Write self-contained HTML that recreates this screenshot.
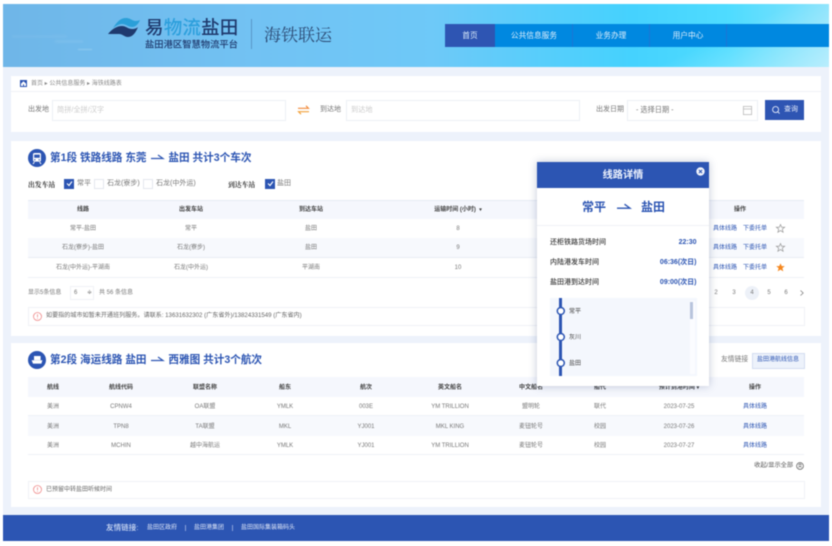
<!DOCTYPE html>
<html lang="zh"><head><meta charset="utf-8"><title>海铁联运</title>
<style>
html,body{margin:0;padding:0;background:#fff}
body{width:832px;height:546px;overflow:hidden;position:relative;font-family:"Liberation Sans","Noto Sans CJK SC",sans-serif;color:#777}
#r{position:absolute;left:0;top:0;width:832px;height:546px;filter:blur(.4px);overflow:hidden}
.a{position:absolute}
.c,.l,.e{position:absolute;white-space:nowrap;font-size:6px;line-height:10px}
.c{transform:translate(-50%,-50%)}
.l{transform:translateY(-50%)}
.e{transform:translate(-100%,-50%)}
.h{color:#444;font-weight:700}
.b{color:#2c55b3}
.t{font-size:10.6px;font-weight:700;color:#2c55b3;line-height:16px}
.ar{display:inline-block;width:12px;height:6px;margin:0 2px;vertical-align:1px}
.ar svg{position:static;display:block}
.cb{position:absolute;width:8px;height:8px;border:1px solid #e4e7ee;background:#fff;top:178.5px}
.on{background:#2c55b3;border-color:#2c55b3}
.inp{position:absolute;top:100px;height:19px;background:#fff;border:1px solid #edf0f5}
.ln{position:absolute;left:28px;width:776px;height:1px;background:#eef1f7}
.band{position:absolute;left:28px;width:776px;background:#f5f7fd}
svg{position:absolute;overflow:visible}
.f7{font-size:7px}
.pl{font-size:7.2px;color:#ccc}
.n{color:#e0f0fc;font-size:7.7px}
.k{font-size:7px;color:#3a3a3a;font-weight:500}
.v{font-size:7px;color:#2c55b3;font-weight:700}
.s{font-size:6px;color:#444}
</style></head><body><div id="r">

<div class="a" style="left:3px;top:4px;width:826px;height:63px;background:linear-gradient(155deg,rgba(255,255,255,0) 82%,rgba(255,255,255,.42) 100%),linear-gradient(90deg,#6fb6e8 0%,#72c2f3 30%,#6ec9f8 52%,#45d2fe 76%,#4fdcff 88%,#86e2fc 100%)"></div>
<div class="a" style="left:12px;top:36px;width:55px;height:1px;background:rgba(255,255,255,.14);filter:blur(1px)"></div>
<div class="a" style="left:55px;top:41px;width:28px;height:1px;background:rgba(255,255,255,.2);filter:blur(1px)"></div>
<div class="a" style="left:78px;top:49px;width:14px;height:1px;background:rgba(255,255,255,.25);filter:blur(.6px)"></div>

<svg style="left:108px;top:18px" width="32" height="20" viewBox="0 0 32 20">
<path d="M5 10C9 4 12 0 18 0c4 0 5 2 9 3 2 0 4-.4 5-1-1 3-4 7-8 7-4 0-6-3-10-3-3 0-6 2-9 4z" fill="#2a9fd8"/>
<path d="M0 16C4 11 9 8 14 8c4 0 6 3 10 3 3 0 5-1 6-2-2 5-5 10-10 10-4 0-5-3-9-3-4 0-8 0-11 0z" fill="#1f3a6e"/></svg>
<div class="l" style="left:145px;top:28px;font-size:18.5px;line-height:20px;letter-spacing:.2px;color:#1f3a6e;font-weight:500"><span>易</span><span style="color:#2c9fdc">物流</span><span>盐田</span></div>
<div class="l" style="left:145px;top:45px;font-size:9.3px;line-height:11px;color:#1f3a6e;font-weight:500">盐田港区智慧物流平台</div>
<div class="a" style="left:251px;top:19px;width:1px;height:30px;background:rgba(60,100,150,.45)"></div>
<div class="l" style="left:264px;top:34px;font-family:'Noto Serif CJK SC',serif;font-size:17px;line-height:20px;color:#2b4a74">海铁联运</div>

<div class="a" style="left:445px;top:24px;width:384px;height:23px;background:#0088e0"></div>
<div class="a" style="left:445px;top:24px;width:50px;height:23px;background:#2e55b3"></div>
<div class="a" style="left:572px;top:24px;width:1px;height:23px;background:#1d76d4"></div>
<div class="a" style="left:649px;top:24px;width:1px;height:23px;background:#1d76d4"></div>
<div class="a" style="left:726px;top:24px;width:1px;height:23px;background:#1d76d4"></div>
<div class="c n" style="left:470px;top:36px">首页</div>
<div class="c n" style="left:534px;top:36px">公共信息服务</div>
<div class="c n" style="left:611px;top:36px">业务办理</div>
<div class="c n" style="left:688px;top:36px">用户中心</div>

<div class="a" style="left:3px;top:67px;width:826px;height:448px;background:#edf2fb"></div>
<div class="a" style="left:11px;top:76px;width:810px;height:56px;background:#fff"></div>
<div class="a" style="left:11px;top:141px;width:810px;height:195px;background:#fff"></div>
<div class="a" style="left:11px;top:343px;width:810px;height:164px;background:#fff"></div>
<div class="a" style="left:3px;top:515px;width:826px;height:26px;background:#2c55b3"></div>

<!-- breadcrumb -->
<div class="a" style="left:11px;top:91px;width:810px;height:1px;background:#f0f2f6"></div>
<svg style="left:20px;top:80px" width="7" height="7" viewBox="0 0 7 7"><rect width="7" height="7" fill="#2c55b3"/><path d="M1 3.6L3.5 1.3 6 3.6V6H1z" fill="#fff"/><rect x="3" y="4.2" width="1" height="1.8" fill="#2c55b3"/></svg>
<div class="l" style="left:31px;top:84px;color:#888">首页 ▸ 公共信息服务 ▸ 海铁线路表</div>

<!-- search -->
<div class="l f7" style="left:28px;top:110px">出发地</div>
<div class="inp" style="left:52px;width:232px"></div>
<div class="l pl" style="left:57px;top:110px">简拼/全拼/汉字</div>
<svg style="left:298px;top:105px" width="11" height="10" viewBox="0 0 11 10" fill="none" stroke-width="1.1"><path d="M0 3.3h10.5L8 .8" stroke="#f28a3a"/><path d="M11 6.7H.5L3 9.2" stroke="#f2a13a"/></svg>
<div class="l f7" style="left:320px;top:110px">到达地</div>
<div class="inp" style="left:346px;width:232px"></div>
<div class="l pl" style="left:351px;top:110px">到达地</div>
<div class="l f7" style="left:596px;top:110px">出发日期</div>
<div class="inp" style="left:627px;width:129px"></div>
<div class="l" style="left:636px;top:110px;font-size:7.2px">- 选择日期 -</div>
<svg style="left:743px;top:106px" width="9" height="9" viewBox="0 0 9 9" fill="none" stroke="#bbb" stroke-width=".8"><rect x=".4" y=".4" width="8.2" height="8.2"/><path d="M.4 3h8.2"/></svg>
<div class="a" style="left:765px;top:100px;width:39px;height:20px;background:#2e55b3"></div>
<svg style="left:772px;top:106px" width="8" height="8" viewBox="0 0 8 8" fill="none" stroke="#e8eefb" stroke-width=".9"><circle cx="3.6" cy="3.6" r="3"/><path d="M5.8 5.8L7.6 7.6"/></svg>
<div class="l f7" style="left:784px;top:110px;color:#e8eefb">查询</div>

<!-- section 1 -->
<svg style="left:28px;top:149px" width="18" height="18" viewBox="0 0 18 18"><circle cx="9" cy="9" r="9" fill="#2c55b3"/><rect x="5" y="4" width="8" height="8.6" rx="1.6" fill="#fff"/><rect x="6.2" y="5.6" width="5.6" height="3.2" fill="#2c55b3"/><circle cx="6.8" cy="10.8" r=".7" fill="#2c55b3"/><circle cx="11.2" cy="10.8" r=".7" fill="#2c55b3"/><path d="M6.4 13l-1.4 2M11.6 13l1.4 2" stroke="#fff" stroke-width="1"/></svg>
<div class="l t" style="left:50px;top:158px">第1段 铁路线路 东莞 <span class="ar"><svg width="12" height="6" viewBox="0 0 12 6" fill="none" stroke="#2c55b3" stroke-width="1.2"><path d="M0 4.5h12L7 1"/></svg></span> 盐田 共计3个车次</div>

<div class="l" style="left:28px;top:183.5px;font-family:'Noto Serif CJK SC',serif;font-size:6.8px;color:#333;font-weight:700">出发车站</div>
<div class="cb on" style="left:64px"></div>
<svg style="left:65.5px;top:180px" width="7" height="7" viewBox="0 0 7 7" fill="none" stroke="#fff" stroke-width="1.1"><path d="M1 3.5l2 2 3-4"/></svg>
<div class="l f7" style="left:77px;top:184px">常平</div>
<div class="cb" style="left:94px"></div>
<div class="l f7" style="left:107px;top:184px">石龙(寮步)</div>
<div class="cb" style="left:143px"></div>
<div class="l f7" style="left:156px;top:184px">石龙(中外运)</div>
<div class="l" style="left:228px;top:183.5px;font-family:'Noto Serif CJK SC',serif;font-size:6.8px;color:#333;font-weight:700">到达车站</div>
<div class="cb on" style="left:265px"></div>
<svg style="left:266.5px;top:180px" width="7" height="7" viewBox="0 0 7 7" fill="none" stroke="#fff" stroke-width="1.1"><path d="M1 3.5l2 2 3-4"/></svg>
<div class="l f7" style="left:277px;top:184px">盐田</div>

<div class="band" style="top:200px;height:19px"></div>
<div class="ln" style="top:200px;background:#e6ebf5"></div>
<div class="band" style="top:238px;height:19px;background:#f7f9fd"></div>
<div class="ln" style="top:257px;background:#e9edf4"></div>
<div class="ln" style="top:277px"></div>

<div class="c h" style="left:83px;top:210px">线路</div>
<div class="c h" style="left:191px;top:210px">出发车站</div>
<div class="c h" style="left:311px;top:210px">到达车站</div>
<div class="c h" style="left:458px;top:210px">运输时间 (小时) &nbsp;<span style="font-size:5px">▾</span></div>
<div class="c h" style="left:740px;top:210px">操作</div>

<div class="c" style="left:83px;top:229px">常平-盐田</div>
<div class="c" style="left:191px;top:229px">常平</div>
<div class="c" style="left:311px;top:229px">盐田</div>
<div class="c" style="left:458px;top:229px">8</div>
<div class="c" style="left:83px;top:248px">石龙(寮步)-盐田</div>
<div class="c" style="left:191px;top:248px">石龙(寮步)</div>
<div class="c" style="left:311px;top:248px">盐田</div>
<div class="c" style="left:458px;top:248px">9</div>
<div class="c" style="left:83px;top:268px">石龙(中外运)-平湖南</div>
<div class="c" style="left:191px;top:268px">石龙(中外运)</div>
<div class="c" style="left:311px;top:268px">平湖南</div>
<div class="c" style="left:458px;top:268px">10</div>

<div class="l" style="left:28px;top:293px">显示5条信息</div>
<div class="a" style="left:70px;top:286px;width:22px;height:12px;border:1px solid #f0f2f6"></div>
<div class="l" style="left:74px;top:293px">6</div>
<div class="l" style="left:87px;top:293px">≑</div>
<div class="l" style="left:99px;top:293px">共 56 条信息</div>

<div class="a" style="left:28px;top:307px;width:775px;height:17px;border:1px solid #f0f2f6"></div>
<svg style="left:33px;top:312px" width="9" height="9" viewBox="0 0 9 9" fill="none" stroke="#ef8a8a" stroke-width=".8"><circle cx="4.5" cy="4.5" r="4"/><path d="M4.5 2.2v3M4.5 6.2v.8"/></svg>
<div class="l" style="left:46px;top:316px;font-size:6.1px;color:#666">如要指的城市如暂未开通班列服务。请联系: 13631632302 (广东省外)/13824331549 (广东省内)</div>

<!-- section 2 -->
<svg style="left:28px;top:351px" width="18" height="18" viewBox="0 0 18 18"><circle cx="9" cy="9" r="9" fill="#2c55b3"/><path d="M3.6 9.2h10.8l-1 3.4H5z" fill="#fff"/><rect x="6" y="5" width="6.6" height="4.2" fill="#fff"/></svg>
<div class="l t" style="left:50px;top:360px">第2段 海运线路 盐田 <span class="ar"><svg width="12" height="6" viewBox="0 0 12 6" fill="none" stroke="#2c55b3" stroke-width="1.2"><path d="M0 4.5h12L7 1"/></svg></span> 西雅图 共计3个航次</div>
<div class="l" style="left:721px;top:360px;font-size:6.8px">友情链接</div>
<div class="a" style="left:752px;top:353px;width:51px;height:14px;background:#edf2fb;border:1px solid #d3ddf0"></div>
<div class="c b" style="left:778px;top:360px">盐田港航线信息</div>

<div class="band" style="top:377px;height:20px"></div>
<div class="band" style="top:416px;height:20px;background:#f7f9fd"></div>
<div class="ln" style="top:415px"></div>
<div class="ln" style="top:454px"></div>

<div class="c h" style="left:53px;top:387.5px">航线</div>
<div class="c h" style="left:121px;top:387.5px">航线代码</div>
<div class="c h" style="left:205px;top:387.5px">联盟名称</div>
<div class="c h" style="left:285px;top:387.5px">船东</div>
<div class="c h" style="left:366px;top:387.5px">航次</div>
<div class="c h" style="left:450px;top:387.5px">英文船名</div>
<div class="c h" style="left:531px;top:387.5px">中文船名</div>
<div class="c h" style="left:600px;top:387.5px">船代</div>
<div class="c h" style="left:679px;top:387.5px">预计到港时间 <span style="font-size:5px">▾</span></div>
<div class="c h" style="left:755px;top:387.5px">操作</div>

<div class="c" style="left:53px;top:406.5px">美洲</div>
<div class="c" style="left:121px;top:406.5px">CPNW4</div>
<div class="c" style="left:205px;top:406.5px">OA联盟</div>
<div class="c" style="left:285px;top:406.5px">YMLK</div>
<div class="c" style="left:366px;top:406.5px">003E</div>
<div class="c" style="left:450px;top:406.5px">YM TRILLION</div>
<div class="c" style="left:531px;top:406.5px">盟明轮</div>
<div class="c" style="left:600px;top:406.5px">联代</div>
<div class="c" style="left:679px;top:406.5px">2023-07-25</div>
<div class="c b" style="left:755px;top:406.5px">具体线路</div>

<div class="c" style="left:53px;top:426.5px">美洲</div>
<div class="c" style="left:121px;top:426.5px">TPN8</div>
<div class="c" style="left:205px;top:426.5px">TA联盟</div>
<div class="c" style="left:285px;top:426.5px">MKL</div>
<div class="c" style="left:366px;top:426.5px">YJ001</div>
<div class="c" style="left:450px;top:426.5px">MKL KING</div>
<div class="c" style="left:531px;top:426.5px">麦钮轮号</div>
<div class="c" style="left:600px;top:426.5px">校园</div>
<div class="c" style="left:679px;top:426.5px">2023-07-26</div>
<div class="c b" style="left:755px;top:426.5px">具体线路</div>

<div class="c" style="left:53px;top:445.5px">美洲</div>
<div class="c" style="left:121px;top:445.5px">MCHIN</div>
<div class="c" style="left:205px;top:445.5px">越中海航运</div>
<div class="c" style="left:285px;top:445.5px">YMLK</div>
<div class="c" style="left:366px;top:445.5px">YJ001</div>
<div class="c" style="left:450px;top:445.5px">YM TRILLION</div>
<div class="c" style="left:531px;top:445.5px">麦钮轮号</div>
<div class="c" style="left:600px;top:445.5px">校园</div>
<div class="c" style="left:679px;top:445.5px">2023-07-27</div>
<div class="c b" style="left:755px;top:445.5px">具体线路</div>

<div class="e" style="left:793px;top:466px;font-size:6.2px;color:#555">收起/显示全部</div>
<svg style="left:796px;top:462px" width="8" height="8" viewBox="0 0 8 8" fill="none" stroke="#555" stroke-width=".7"><circle cx="4" cy="4" r="3.4"/><path d="M2.4 3.2L4 1.9l1.6 1.3M2.4 5.4L4 4.1l1.6 1.3"/></svg>

<div class="a" style="left:28px;top:481px;width:775px;height:16px;border:1px solid #f0f2f6"></div>
<svg style="left:33px;top:485px" width="9" height="9" viewBox="0 0 9 9" fill="none" stroke="#ef8a8a" stroke-width=".8"><circle cx="4.5" cy="4.5" r="4"/><path d="M4.5 2.2v3M4.5 6.2v.8"/></svg>
<div class="l" style="left:46px;top:489.5px;color:#666">已预留中转盐田听候时间</div>

<!-- footer -->
<div class="l" style="left:106px;top:528px;font-size:7.6px;color:#cfdcf4;font-weight:500">友情链接:</div>
<div class="l" style="left:147px;top:528px;color:#dfe7f8">盐田区政府</div>
<div class="a" style="left:185px;top:525px;width:1px;height:6px;background:#8aa3db"></div>
<div class="l" style="left:194px;top:528px;color:#dfe7f8">盐田港集团</div>
<div class="a" style="left:232px;top:525px;width:1px;height:6px;background:#8aa3db"></div>
<div class="l" style="left:241px;top:528px;color:#dfe7f8">盐田国际集装箱码头</div>

<!-- table ops -->
<div class="l b" style="left:713px;top:228.5px">具体线路</div>
<div class="l b" style="left:743px;top:228.5px">下委托单</div>
<div class="l b" style="left:713px;top:248px">具体线路</div>
<div class="l b" style="left:743px;top:248px">下委托单</div>
<div class="l b" style="left:713px;top:267.5px">具体线路</div>
<div class="l b" style="left:743px;top:267.5px">下委托单</div>
<svg style="left:775.5px;top:224px" width="9" height="9" viewBox="0 0 10 10"><path d="M5 .6l1.3 3H9.6L7 5.7l.9 3.4L5 7.3 2.1 9.1 3 5.7.4 3.6h3.3z" fill="none" stroke="#999" stroke-width=".8"/></svg>
<svg style="left:775.5px;top:243px" width="9" height="9" viewBox="0 0 10 10"><path d="M5 .6l1.3 3H9.6L7 5.7l.9 3.4L5 7.3 2.1 9.1 3 5.7.4 3.6h3.3z" fill="none" stroke="#999" stroke-width=".8"/></svg>
<svg style="left:775.5px;top:263px" width="9" height="9" viewBox="0 0 10 10"><path d="M5 .4l1.4 3.1H9.8L7.1 5.7l1 3.6L5 7.4 1.9 9.3l1-3.6L.2 3.5h3.4z" fill="#f5871f"/></svg>

<div class="a" style="left:745px;top:286px;width:14px;height:14px;border-radius:50%;background:#edf1f8"></div>
<div class="c" style="left:716px;top:293px">2</div>
<div class="c" style="left:734px;top:293px">3</div>
<div class="c" style="left:752px;top:293px">4</div>
<div class="c" style="left:769px;top:293px">5</div>
<div class="c" style="left:786px;top:293px">6</div>
<svg style="left:800px;top:290px" width="4" height="6" viewBox="0 0 4 6" fill="none" stroke="#777" stroke-width=".7"><path d="M.5.5L3.2 3 .5 5.5"/></svg>

<!-- popup -->
<div class="a" style="left:537px;top:162px;width:172px;height:224px;background:#fff;box-shadow:0 0 8px rgba(40,60,110,.28)"></div>
<div class="a" style="left:537px;top:162px;width:172px;height:26px;background:#2c55b3"></div>
<div class="c" style="left:623px;top:175.5px;font-size:10.2px;line-height:12px;font-weight:700;color:#eef3fd">线路详情</div>
<svg style="left:696px;top:166.5px" width="9" height="9" viewBox="0 0 9 9"><circle cx="4.5" cy="4.5" r="4.2" fill="#f2f5fc"/><path d="M2.9 2.9l3.2 3.2M6.1 2.9L2.9 6.1" stroke="#2c55b3" stroke-width="1"/></svg>
<div class="l" style="left:582px;top:207px;font-size:12px;line-height:14px;font-weight:700;color:#2c55b3">常平</div>
<svg style="left:617px;top:203px" width="13" height="7" viewBox="0 0 13 7" fill="none" stroke="#2c55b3" stroke-width="1.3"><path d="M0 5.2h13L7.5 1.2"/></svg>
<div class="l" style="left:641px;top:207px;font-size:12px;line-height:14px;font-weight:700;color:#2c55b3">盐田</div>
<div class="a" style="left:537px;top:225px;width:172px;height:1px;background:#f0f2f6"></div>
<div class="l k" style="left:550px;top:242.5px">还柜铁路货场时间</div>
<div class="e v" style="left:696.5px;top:242.5px">22:30</div>
<div class="l k" style="left:550px;top:262.5px">内陆港发车时间</div>
<div class="e v" style="left:696.5px;top:262.5px">06:36(次日)</div>
<div class="l k" style="left:550px;top:282.5px">盐田港到达时间</div>
<div class="e v" style="left:696.5px;top:282.5px">09:00(次日)</div>
<div class="a" style="left:550px;top:298px;width:147px;height:78px;background:#f4f7fd"></div>
<div class="a" style="left:559px;top:298px;width:3px;height:78px;background:#2c55b3"></div>
<svg style="left:556px;top:306px" width="10" height="62" viewBox="0 0 10 62" fill="#fff" stroke="#2c55b3" stroke-width="1.5"><circle cx="4.8" cy="5" r="3.5"/><circle cx="4.8" cy="31" r="3.5"/><circle cx="4.8" cy="57" r="3.5"/></svg>
<div class="l s" style="left:569px;top:311.5px">常平</div>
<div class="l s" style="left:569px;top:337.5px">灰川</div>
<div class="l s" style="left:569px;top:363.5px">盐田</div>
<div class="a" style="left:690px;top:301px;width:5px;height:73px;background:#fbfcff"></div>
<div class="a" style="left:690px;top:302px;width:3px;height:17px;background:#b8c4dc"></div>

</div></body></html>
